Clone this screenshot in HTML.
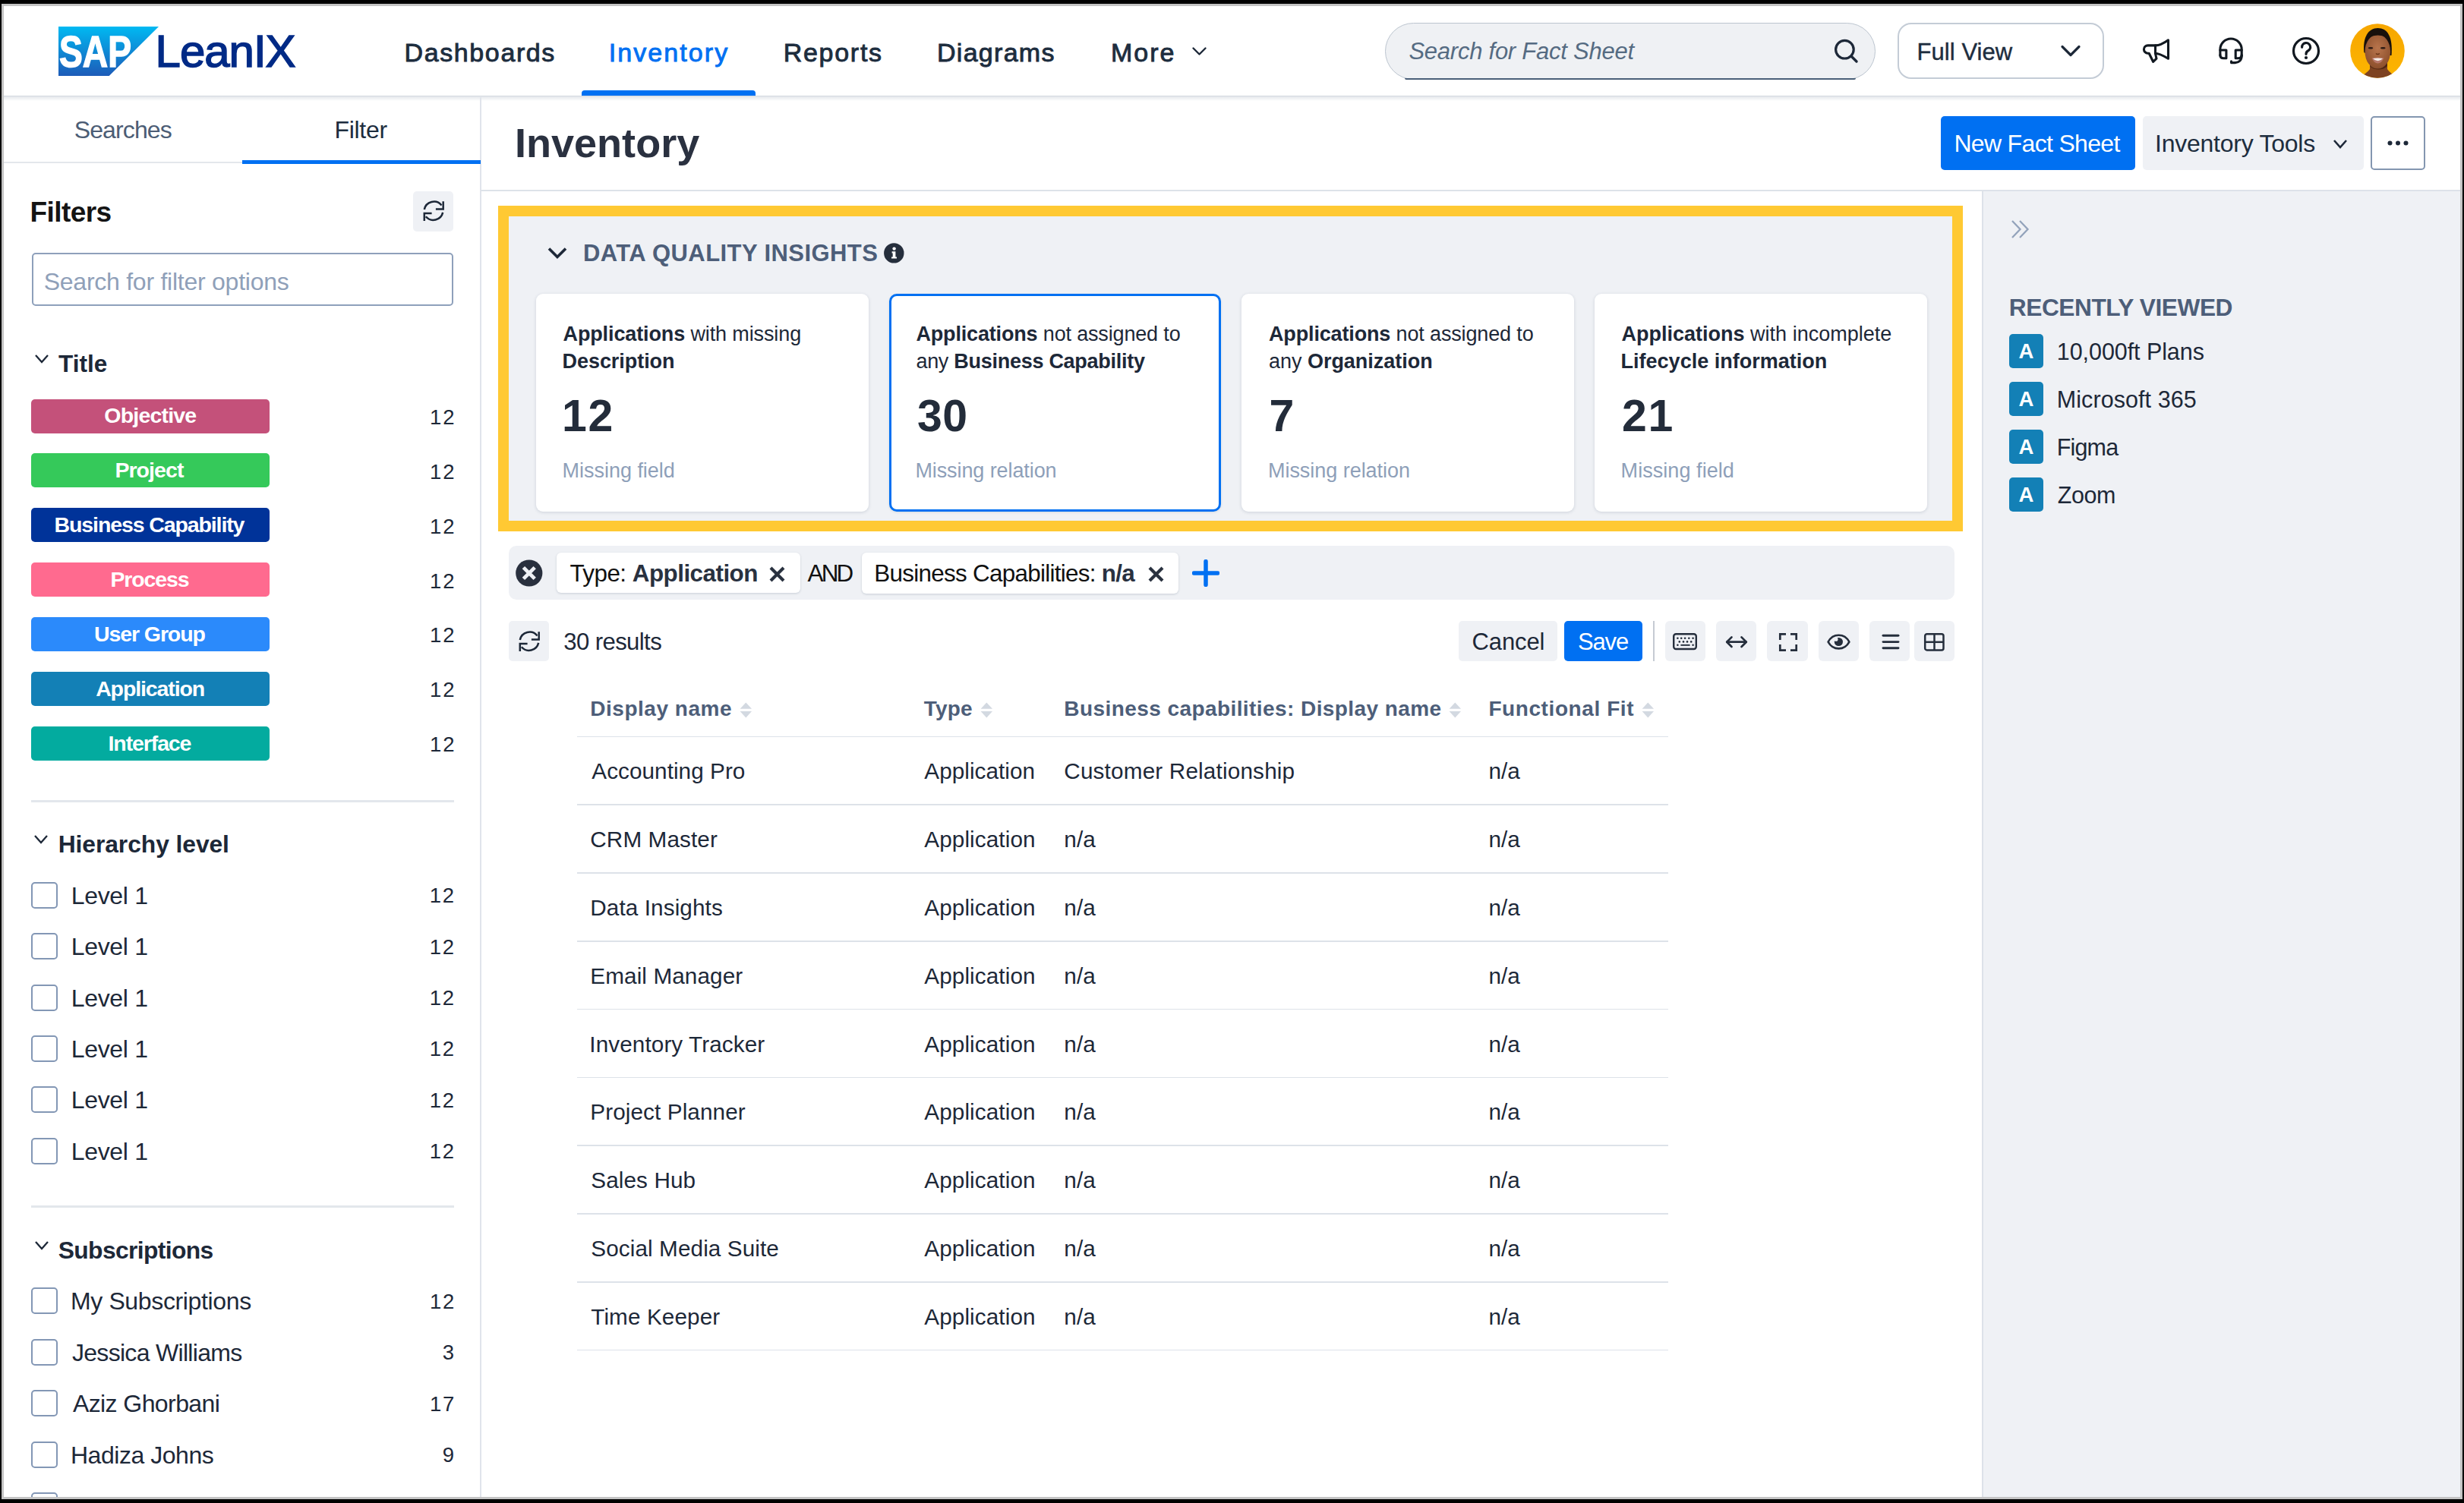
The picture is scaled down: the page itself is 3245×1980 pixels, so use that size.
<!DOCTYPE html>
<html><head><meta charset="utf-8"><title>SAP LeanIX Inventory</title>
<style>
html,body{margin:0;padding:0;width:3245px;height:1980px;overflow:hidden;background:#000;}
.a{position:absolute;display:block;}
.t{font-family:'Liberation Sans', sans-serif;line-height:1;white-space:nowrap;}
b{font-weight:700;}
</style></head><body>
<div class="a" style="left:2.00px;top:5.00px;width:3241.00px;height:1970.00px;background:#c3c3c3;"></div>
<div class="a" style="left:5.00px;top:8.00px;width:3235.00px;height:1964.00px;background:#ffffff;"></div>
<div class="a" style="left:0;top:0;width:3245px;height:1980px;clip-path:inset(8px 5px 8px 5px);">
<div class="a" style="left:5.00px;top:126.00px;width:3235.00px;height:7.00px;background:linear-gradient(#d3d8df 0px,#d3d8df 1px,rgba(210,215,222,0.55) 1.5px,rgba(230,233,238,0) 7px);"></div>
<div class="a" style="left:766.40px;top:119.00px;width:229.00px;height:7.00px;background:#0070f2;border-radius:4px 4px 0 0;"></div>
<svg class="a" style="left:77px;top:35px;" width="132" height="65" viewBox="0 0 132 65"><defs><linearGradient id="lg" x1="0" y1="0" x2="0" y2="1"><stop offset="0" stop-color="#00b9f2"/><stop offset="1" stop-color="#1d5bb8"/></linearGradient></defs><polygon points="0,0 132,0 66.7,65 0,65" fill="url(#lg)"/><text x="1" y="53" style="font-family:Liberation Sans;font-weight:700;font-size:58px" fill="#fff" stroke="#fff" stroke-width="1.5" textLength="95" lengthAdjust="spacingAndGlyphs">SAP</text></svg>
<div class="a" style="left:1824.30px;top:29.70px;width:646.00px;height:75.30px;background:#eff1f4;border:1.5px solid #bcc5cf;box-sizing:border-box;border-radius:38px;"></div>
<div class="a" style="left:1850.00px;top:102.60px;width:594.00px;height:2.40px;background:#4a5f78;border-radius:0 0 2px 2px;"></div>
<svg class="a" style="left:2410px;top:46px;" width="40" height="40" viewBox="0 0 40 40"><circle cx="19.4" cy="19.2" r="11.8" fill="none" stroke="#1d2838" stroke-width="3.2"/><line x1="28" y1="28" x2="35" y2="35" stroke="#1d2838" stroke-width="3.4" stroke-linecap="round"/></svg>
<div class="a" style="left:2498.50px;top:29.90px;width:272.50px;height:74.50px;background:#ffffff;border:2px solid #c4ccd6;box-sizing:border-box;border-radius:18px;"></div>
<svg class="a" style="left:2710px;top:55px;" width="34" height="25" viewBox="0 0 34 25"><polyline points="6,6.5 17,17.5 28,6.5" fill="none" stroke="#1d2838" stroke-width="3.2" stroke-linecap="round" stroke-linejoin="round"/></svg>
<svg class="a" style="left:1566px;top:58px;" width="28" height="20" viewBox="0 0 28 20"><polyline points="5.5,5.5 13.5,13.5 21.5,5.5" fill="none" stroke="#1d2838" stroke-width="2.4" stroke-linecap="round" stroke-linejoin="round"/></svg>
<svg class="a" style="left:2816px;top:46px;" width="48" height="44" viewBox="0 0 48 44"><g fill="none" stroke="#111820" stroke-width="3.1" stroke-linejoin="round" stroke-linecap="round"><path d="M22.5,13.9 C28,13.9 34,10.8 39.5,6.8 V31.3 C34,28 28,24.2 22.5,24.2"/><path d="M22.5,13.9 H12.6 A5.15,5.15 0 0 0 12.6,24.2 H14.2 L19.6,35.3 L24,31.2 L22.5,24.2 Z"/></g></svg>
<svg class="a" style="left:2917px;top:44px;" width="44" height="46" viewBox="0 0 44 46"><g fill="none" stroke="#111820" stroke-width="3.1" stroke-linejoin="round" stroke-linecap="round"><path d="M6.9,29 V21 A14.15,14 0 0 1 35.2,21 V29"/><path d="M6.9,22 H14.9 V32.8 H11.5 Q6.9,32.8 6.9,28.5"/><path d="M35.2,22 H27.2 V32.8 H30.6 Q35.2,32.8 35.2,28.5"/><path d="M35.2,29 C35.2,35.5 31.5,38.6 26.5,38.6 H21.5 V36.8"/></g></svg>
<svg class="a" style="left:3015px;top:45px;" width="44" height="44" viewBox="0 0 44 44"><circle cx="22" cy="22" r="16.5" fill="none" stroke="#111820" stroke-width="3.2"/><path d="M16.6,17.2 A5.5,5.5 0 1 1 24.5,22 C22.6,23 22,23.8 22,26.3" fill="none" stroke="#111820" stroke-width="3.2" stroke-linecap="round"/><circle cx="22" cy="31" r="2.1" fill="#111820"/></svg>
<svg class="a" style="left:3095px;top:31px;" width="72" height="72" viewBox="0 0 72 72"><defs><clipPath id="av"><circle cx="36" cy="36" r="35.8"/></clipPath><linearGradient id="ag" x1="0" y1="0" x2="0" y2="1"><stop offset="0" stop-color="#f6a600"/><stop offset="1" stop-color="#fdb500"/></linearGradient><radialGradient id="fg" cx="0.5" cy="0.4" r="0.6"><stop offset="0" stop-color="#b9754c"/><stop offset="1" stop-color="#8c4f2c"/></radialGradient></defs><g clip-path="url(#av)"><rect width="72" height="72" fill="url(#ag)"/><path d="M12,74 C16,67 23,65 26,60 L26,47 L49,47 L49,60 C52,65 58,67 62,74 Z" fill="#7e4322"/><path d="M26,50 C30,58 43,58 49,50 L49,56 C44,62 31,62 26,56 Z" fill="#4e2612"/><path d="M18.3,38 C16.5,18 24,6 36.5,6 C49,6 56.5,17 54.5,42 L50,42 L22,40 Z" fill="#17100c"/><ellipse cx="36.3" cy="37" rx="16.8" ry="22.6" fill="url(#fg)"/><path d="M19.6,27 C20.5,10 52,9 53.2,27 C50,18.5 43,15.6 36.5,15.6 C30,15.6 23,18.5 19.6,27 Z" fill="#17100c"/><ellipse cx="27" cy="32.3" rx="3.2" ry="1.3" fill="#2b1a14"/><ellipse cx="43.3" cy="32.3" rx="3.3" ry="1.3" fill="#2b1a14"/><path d="M28.5,45.5 Q36.5,43.8 44.5,45.5 Q41,52.5 36.5,52.5 Q32,52.5 28.5,45.5 Z" fill="#b8776a"/><path d="M30,46 Q36.5,45 43,46 Q40,49.3 36.5,49.3 Q33,49.3 30,46 Z" fill="#f3ece6"/><path d="M34,39.5 Q36.3,41.5 38.8,39.5" fill="none" stroke="#6a3518" stroke-width="1.4"/></g></svg>
<div class="a" style="left:632.00px;top:128.00px;width:2.00px;height:1844.00px;background:#e0e4eb;"></div>
<div class="a" style="left:5.00px;top:213.00px;width:314.00px;height:2.00px;background:#e3e7ec;"></div>
<div class="a" style="left:319.30px;top:211.00px;width:313.70px;height:4.70px;background:#0070f2;"></div>
<div class="a" style="left:544.00px;top:251.70px;width:53.40px;height:53.30px;background:#eff1f5;border-radius:5px;"></div>
<svg class="a" style="left:555.7px;top:263.4px;" width="30" height="30" viewBox="0 0 30 30"><g fill="none" stroke="#1d2838" stroke-width="2.5"><path d="M2.8,13.1 A12.9,12.9 0 0 1 25.5,7.5"/><path d="M27.7,2.3 V12.4 H17.9"/><path d="M27.2,16.9 A12.9,12.9 0 0 1 4.8,22.3"/><path d="M2.8,28.1 V17.9 H12.6"/></g></svg>
<div class="a" style="left:41.50px;top:333.00px;width:555.90px;height:70.00px;background:#ffffff;border:2px solid #8ea0bb;box-sizing:border-box;border-radius:5px;"></div>
<svg class="a" style="left:42.5px;top:463.5px;" width="24.0" height="17.0" viewBox="0 0 24.0 17.0"><polyline points="4,4 12.0,13.0 20.0,4" fill="none" stroke="#1d2838" stroke-width="2.3" stroke-linecap="butt" stroke-linejoin="miter"/></svg>
<svg class="a" style="left:42.3px;top:1096.5px;" width="24.0" height="17.0" viewBox="0 0 24.0 17.0"><polyline points="4,4 12.0,13.0 20.0,4" fill="none" stroke="#1d2838" stroke-width="2.3" stroke-linecap="butt" stroke-linejoin="miter"/></svg>
<svg class="a" style="left:42.5px;top:1631.5px;" width="24.0" height="17.0" viewBox="0 0 24.0 17.0"><polyline points="4,4 12.0,13.0 20.0,4" fill="none" stroke="#1d2838" stroke-width="2.3" stroke-linecap="butt" stroke-linejoin="miter"/></svg>
<div class="a" style="left:40.90px;top:525.50px;width:314.40px;height:45.00px;background:#c4517a;border-radius:5px;"></div>
<div class="a" style="left:40.90px;top:597.40px;width:314.40px;height:45.00px;background:#35c95a;border-radius:5px;"></div>
<div class="a" style="left:40.90px;top:669.30px;width:314.40px;height:45.00px;background:#003399;border-radius:5px;"></div>
<div class="a" style="left:40.90px;top:741.20px;width:314.40px;height:45.00px;background:#ff6a8f;border-radius:5px;"></div>
<div class="a" style="left:40.90px;top:813.10px;width:314.40px;height:45.00px;background:#2b8afb;border-radius:5px;"></div>
<div class="a" style="left:40.90px;top:885.00px;width:314.40px;height:45.00px;background:#1380b6;border-radius:5px;"></div>
<div class="a" style="left:40.90px;top:956.90px;width:314.40px;height:45.00px;background:#03ab9f;border-radius:5px;"></div>
<div class="a" style="left:41.00px;top:1054.00px;width:556.60px;height:2.50px;background:#e3e7ec;"></div>
<div class="a" style="left:41.00px;top:1588.00px;width:556.60px;height:2.50px;background:#e3e7ec;"></div>
<div class="a" style="left:41.20px;top:1161.60px;width:35.30px;height:35.00px;background:#fff;border:2px solid #8397b5;box-sizing:border-box;border-radius:5px;"></div>
<div class="a" style="left:41.20px;top:1229.05px;width:35.30px;height:35.00px;background:#fff;border:2px solid #8397b5;box-sizing:border-box;border-radius:5px;"></div>
<div class="a" style="left:41.20px;top:1296.50px;width:35.30px;height:35.00px;background:#fff;border:2px solid #8397b5;box-sizing:border-box;border-radius:5px;"></div>
<div class="a" style="left:41.20px;top:1363.95px;width:35.30px;height:35.00px;background:#fff;border:2px solid #8397b5;box-sizing:border-box;border-radius:5px;"></div>
<div class="a" style="left:41.20px;top:1431.40px;width:35.30px;height:35.00px;background:#fff;border:2px solid #8397b5;box-sizing:border-box;border-radius:5px;"></div>
<div class="a" style="left:41.20px;top:1498.85px;width:35.30px;height:35.00px;background:#fff;border:2px solid #8397b5;box-sizing:border-box;border-radius:5px;"></div>
<div class="a" style="left:41.20px;top:1696.00px;width:35.30px;height:35.00px;background:#fff;border:2px solid #8397b5;box-sizing:border-box;border-radius:5px;"></div>
<div class="a" style="left:41.20px;top:1763.60px;width:35.30px;height:35.00px;background:#fff;border:2px solid #8397b5;box-sizing:border-box;border-radius:5px;"></div>
<div class="a" style="left:41.20px;top:1831.20px;width:35.30px;height:35.00px;background:#fff;border:2px solid #8397b5;box-sizing:border-box;border-radius:5px;"></div>
<div class="a" style="left:41.20px;top:1898.80px;width:35.30px;height:35.00px;background:#fff;border:2px solid #8397b5;box-sizing:border-box;border-radius:5px;"></div>
<div class="a" style="left:41.20px;top:1966.40px;width:35.30px;height:35.00px;background:#fff;border:2px solid #8397b5;box-sizing:border-box;border-radius:5px;"></div>
<div class="a" style="left:633.00px;top:250.00px;width:2607.00px;height:1.50px;background:#dde2e9;"></div>
<div class="a" style="left:2556.30px;top:152.90px;width:255.60px;height:71.20px;background:#0070f2;border-radius:5px;"></div>
<div class="a" style="left:2821.70px;top:152.90px;width:291.50px;height:71.20px;background:#eff1f5;border-radius:5px;"></div>
<svg class="a" style="left:3070px;top:180.5px;" width="24" height="17.0" viewBox="0 0 24 17.0"><polyline points="4,4 12.0,13.0 20.0,4" fill="none" stroke="#1d2838" stroke-width="2.6" stroke-linecap="butt" stroke-linejoin="miter"/></svg>
<div class="a" style="left:3122.40px;top:153.20px;width:71.20px;height:70.80px;background:#fff;border:2px solid #8396b0;box-sizing:border-box;border-radius:5px;"></div>
<svg class="a" style="left:3140px;top:182px;" width="36" height="12" viewBox="0 0 36 12"><circle cx="7.5" cy="6.5" r="3" fill="#1d2838"/><circle cx="18" cy="6.5" r="3" fill="#1d2838"/><circle cx="28.5" cy="6.5" r="3" fill="#1d2838"/></svg>
<div class="a" style="left:2610.00px;top:251.50px;width:630.00px;height:1720.50px;background:#eff1f5;"></div>
<div class="a" style="left:2609.50px;top:251.50px;width:2.00px;height:1720.50px;background:#dde2e9;"></div>
<svg class="a" style="left:2645px;top:286px;" width="32" height="32" viewBox="0 0 32 32"><g fill="none" stroke="#93a3bb" stroke-width="2.3" stroke-linejoin="miter"><polyline points="5,5 15.5,16 5,27"/><polyline points="15,5 25.5,16 15,27"/></g></svg>
<div class="a" style="left:2646.00px;top:440.30px;width:45.00px;height:44.60px;background:#1380b6;border-radius:5px;"></div>
<div class="a" style="left:2646.00px;top:503.30px;width:45.00px;height:44.60px;background:#1380b6;border-radius:5px;"></div>
<div class="a" style="left:2646.00px;top:566.30px;width:45.00px;height:44.60px;background:#1380b6;border-radius:5px;"></div>
<div class="a" style="left:2646.00px;top:629.30px;width:45.00px;height:44.60px;background:#1380b6;border-radius:5px;"></div>
<div class="a" style="left:656.00px;top:271.00px;width:1929.00px;height:429.00px;background:#eff1f5;border:14px solid #ffc933;box-sizing:border-box;"></div>
<svg class="a" style="left:716px;top:320px;" width="36" height="26" viewBox="0 0 36 26"><polyline points="7,7.5 18,18.5 29,7.5" fill="none" stroke="#1d2838" stroke-width="3.6" stroke-linejoin="miter"/></svg>
<svg class="a" style="left:1162px;top:318px;" width="30" height="30" viewBox="0 0 30 30"><circle cx="15.3" cy="15.4" r="13.2" fill="#252e3c"/><circle cx="15.6" cy="9.6" r="2.2" fill="#fff"/><path d="M12.6,13.3 H17.4 V20.4 H19 V22.6 H12 V20.4 H13.7 V15.4 H12.6 Z" fill="#fff"/></svg>
<div class="a" style="left:706.00px;top:387.00px;width:438.00px;height:287.00px;background:#fff;border-radius:9px;box-shadow:0 1px 4px rgba(30,50,80,0.16);"></div>
<div class="a" style="left:1171.00px;top:387.00px;width:437.00px;height:287.00px;background:#fff;border:3.5px solid #0070f2;box-sizing:border-box;border-radius:10px;box-shadow:0 1px 3px rgba(30,50,80,0.12);"></div>
<div class="a" style="left:1635.00px;top:387.00px;width:438.00px;height:287.00px;background:#fff;border-radius:9px;box-shadow:0 1px 4px rgba(30,50,80,0.16);"></div>
<div class="a" style="left:2100.00px;top:387.00px;width:438.00px;height:287.00px;background:#fff;border-radius:9px;box-shadow:0 1px 4px rgba(30,50,80,0.16);"></div>
<div class="a" style="left:669.90px;top:718.90px;width:1904.10px;height:71.50px;background:#eff1f5;border-radius:10px;"></div>
<svg class="a" style="left:677px;top:734.5px;" width="40" height="40" viewBox="0 0 40 40"><circle cx="19.8" cy="20" r="17.6" fill="#29303e"/><path d="M12.4,12.6 L27.2,27.4 M27.2,12.6 L12.4,27.4" stroke="#eff1f5" stroke-width="4.8" stroke-linecap="butt"/></svg>
<div class="a" style="left:732.90px;top:727.90px;width:320.90px;height:53.50px;background:#fff;border-radius:6px;box-shadow:0 1px 3px rgba(30,50,80,0.18);"></div>
<div class="a" style="left:1134.70px;top:727.80px;width:417.30px;height:54.00px;background:#fff;border-radius:6px;box-shadow:0 1px 3px rgba(30,50,80,0.18);"></div>
<svg class="a" style="left:1012px;top:745px;" width="23" height="23" viewBox="0 0 23 23"><path d="M3,3 L20.0,20.0 M20.0,3 L3,20.0" stroke="#29313f" stroke-width="4.2"/></svg>
<svg class="a" style="left:1510.5px;top:745px;" width="23.0" height="23" viewBox="0 0 23.0 23"><path d="M3,3 L20.0,20.0 M20.0,3 L3,20.0" stroke="#29313f" stroke-width="4.2"/></svg>
<svg class="a" style="left:1570px;top:737px;" width="36" height="36" viewBox="0 0 36 36"><path d="M18,2.5 V33.5 M2.5,18 H33.5" stroke="#0070f2" stroke-width="5.5" stroke-linecap="round"/></svg>
<div class="a" style="left:670.20px;top:817.70px;width:53.10px;height:53.00px;background:#eff1f5;border-radius:5px;"></div>
<svg class="a" style="left:681.5px;top:830.4px;" width="30" height="30" viewBox="0 0 30 30"><g fill="none" stroke="#1d2838" stroke-width="2.5"><path d="M2.8,13.1 A12.9,12.9 0 0 1 25.5,7.5"/><path d="M27.7,2.3 V12.4 H17.9"/><path d="M27.2,16.9 A12.9,12.9 0 0 1 4.8,22.3"/><path d="M2.8,28.1 V17.9 H12.6"/></g></svg>
<div class="a" style="left:1921.00px;top:817.60px;width:129.70px;height:53.10px;background:#eff1f5;border-radius:5px;"></div>
<div class="a" style="left:2060.00px;top:817.60px;width:103.00px;height:53.40px;background:#0070f2;border-radius:5px;"></div>
<div class="a" style="left:2177.00px;top:818.00px;width:1.60px;height:52.70px;background:#c5cbd3;"></div>
<div class="a" style="left:2192.80px;top:817.80px;width:53.20px;height:53.10px;background:#eff1f5;border-radius:6px;"></div>
<div class="a" style="left:2260.00px;top:817.80px;width:53.20px;height:53.10px;background:#eff1f5;border-radius:6px;"></div>
<div class="a" style="left:2327.40px;top:817.80px;width:53.20px;height:53.10px;background:#eff1f5;border-radius:6px;"></div>
<div class="a" style="left:2394.70px;top:817.80px;width:53.20px;height:53.10px;background:#eff1f5;border-radius:6px;"></div>
<div class="a" style="left:2462.00px;top:817.80px;width:53.20px;height:53.10px;background:#eff1f5;border-radius:6px;"></div>
<div class="a" style="left:2520.50px;top:817.80px;width:53.20px;height:53.10px;background:#eff1f5;border-radius:6px;"></div>
<svg class="a" style="left:2202px;top:833px;" width="34" height="24" viewBox="0 0 34 24"><rect x="2.2" y="2.2" width="29.6" height="19.8" rx="3" fill="none" stroke="#252e3c" stroke-width="2.4"/><circle cx="7.4" cy="7.8" r="1.3" fill="#252e3c"/><circle cx="12.2" cy="7.8" r="1.3" fill="#252e3c"/><circle cx="17.1" cy="7.8" r="1.3" fill="#252e3c"/><circle cx="22.3" cy="7.8" r="1.3" fill="#252e3c"/><circle cx="27.6" cy="7.8" r="1.3" fill="#252e3c"/><circle cx="9.8" cy="12.4" r="1.3" fill="#252e3c"/><circle cx="15" cy="12.4" r="1.3" fill="#252e3c"/><circle cx="20" cy="12.4" r="1.3" fill="#252e3c"/><circle cx="25.2" cy="12.4" r="1.3" fill="#252e3c"/><circle cx="7.4" cy="16.8" r="1.3" fill="#252e3c"/><circle cx="27.6" cy="16.8" r="1.3" fill="#252e3c"/><rect x="11.4" y="15.9" width="12.2" height="1.9" fill="#252e3c"/></svg>
<svg class="a" style="left:2271px;top:836px;" width="32" height="20" viewBox="0 0 32 20"><g fill="none" stroke="#252e3c" stroke-width="2.7" stroke-linecap="round" stroke-linejoin="round"><path d="M3.5,9.7 H28.5"/><polyline points="9.5,3.4 3.2,9.7 9.5,16"/><polyline points="22.5,3.4 28.8,9.7 22.5,16"/></g></svg>
<svg class="a" style="left:2341px;top:832px;" width="28" height="28" viewBox="0 0 28 28"><g fill="none" stroke="#252e3c" stroke-width="2.7"><polyline points="11,3.3 3.3,3.3 3.3,11"/><polyline points="17,3.3 24.7,3.3 24.7,11"/><polyline points="3.3,17 3.3,24.7 11,24.7"/><polyline points="24.7,17 24.7,24.7 17,24.7"/></g></svg>
<svg class="a" style="left:2404px;top:833px;" width="35" height="26" viewBox="0 0 35 26"><path d="M3.6,12.6 C7,6.3 12,3.8 17.5,3.8 C23,3.8 28,6.3 31.4,12.6 C28,18.9 23,21.4 17.5,21.4 C12,21.4 7,18.9 3.6,12.6 Z" fill="none" stroke="#252e3c" stroke-width="2.6" stroke-linejoin="round"/><circle cx="17.4" cy="12.5" r="5.6" fill="#252e3c"/><circle cx="13.9" cy="9.2" r="2.6" fill="#eff1f5"/></svg>
<svg class="a" style="left:2476px;top:834px;" width="28" height="24" viewBox="0 0 28 24"><g stroke="#252e3c" stroke-width="2.9" stroke-linecap="round"><line x1="4" y1="3.3" x2="24" y2="3.3"/><line x1="4" y1="11.6" x2="24" y2="11.6"/><line x1="4" y1="19.8" x2="24" y2="19.8"/></g></svg>
<svg class="a" style="left:2532px;top:832px;" width="31" height="28" viewBox="0 0 31 28"><g fill="none" stroke="#252e3c" stroke-width="2.5"><rect x="3.2" y="3.2" width="24.3" height="21.2" rx="2.5"/><line x1="15.5" y1="3.3" x2="15.5" y2="24.3"/><line x1="3.3" y1="13.8" x2="27.7" y2="13.8"/></g></svg>
<div class="a" style="left:759.50px;top:969.50px;width:1437.50px;height:1.80px;background:#dde2e9;"></div>
<div class="a" style="left:759.50px;top:1059.30px;width:1437.50px;height:1.80px;background:#dde2e9;"></div>
<div class="a" style="left:759.50px;top:1149.10px;width:1437.50px;height:1.80px;background:#dde2e9;"></div>
<div class="a" style="left:759.50px;top:1238.90px;width:1437.50px;height:1.80px;background:#dde2e9;"></div>
<div class="a" style="left:759.50px;top:1328.70px;width:1437.50px;height:1.80px;background:#dde2e9;"></div>
<div class="a" style="left:759.50px;top:1418.50px;width:1437.50px;height:1.80px;background:#dde2e9;"></div>
<div class="a" style="left:759.50px;top:1508.30px;width:1437.50px;height:1.80px;background:#dde2e9;"></div>
<div class="a" style="left:759.50px;top:1598.10px;width:1437.50px;height:1.80px;background:#dde2e9;"></div>
<div class="a" style="left:759.50px;top:1687.90px;width:1437.50px;height:1.80px;background:#dde2e9;"></div>
<div class="a" style="left:759.50px;top:1777.70px;width:1437.50px;height:1.80px;background:#dde2e9;"></div>
<svg class="a" style="left:974px;top:924px;" width="17" height="23" viewBox="0 0 17 23"><polygon points="8.3,1.5 16,9.8 0.6,9.8" fill="#d3d9e1"/><polygon points="0.6,13 16,13 8.3,21.5" fill="#d3d9e1"/></svg>
<svg class="a" style="left:1290.7px;top:924px;" width="17" height="23" viewBox="0 0 17 23"><polygon points="8.3,1.5 16,9.8 0.6,9.8" fill="#d3d9e1"/><polygon points="0.6,13 16,13 8.3,21.5" fill="#d3d9e1"/></svg>
<svg class="a" style="left:1908px;top:924px;" width="17" height="23" viewBox="0 0 17 23"><polygon points="8.3,1.5 16,9.8 0.6,9.8" fill="#d3d9e1"/><polygon points="0.6,13 16,13 8.3,21.5" fill="#d3d9e1"/></svg>
<svg class="a" style="left:2162px;top:924px;" width="17" height="23" viewBox="0 0 17 23"><polygon points="8.3,1.5 16,9.8 0.6,9.8" fill="#d3d9e1"/><polygon points="0.6,13 16,13 8.3,21.5" fill="#d3d9e1"/></svg>
<span class="a t" style="left:204.60px;top:37.70px;font-size:60px;color:#002a86;letter-spacing:-1.040px;-webkit-text-stroke:1.5px #002a86;">LeanIX</span>
<span class="a t" style="left:532.60px;top:52.30px;font-size:34px;color:#1d2d3e;letter-spacing:1.600px;-webkit-text-stroke:0.9px #1d2d3e;">Dashboards</span>
<span class="a t" style="left:801.80px;top:52.30px;font-size:34px;color:#0070f2;letter-spacing:2.062px;-webkit-text-stroke:0.9px #0070f2;">Inventory</span>
<span class="a t" style="left:1031.70px;top:52.30px;font-size:34px;color:#1d2d3e;letter-spacing:1.717px;-webkit-text-stroke:0.9px #1d2d3e;">Reports</span>
<span class="a t" style="left:1234.00px;top:52.30px;font-size:34px;color:#1d2d3e;letter-spacing:1.286px;-webkit-text-stroke:0.9px #1d2d3e;">Diagrams</span>
<span class="a t" style="left:1463.00px;top:52.30px;font-size:34px;color:#1d2d3e;letter-spacing:2.000px;-webkit-text-stroke:0.9px #1d2d3e;">More</span>
<span class="a t" style="left:1855.40px;top:52.40px;font-size:31px;color:#556b82;letter-spacing:-0.245px;font-style:italic;">Search for Fact Sheet</span>
<span class="a t" style="left:2524.60px;top:52.80px;font-size:31px;color:#1d2d3e;letter-spacing:0.050px;-webkit-text-stroke:0.4px #1d2d3e;">Full View</span>
<span class="a t" style="left:97.70px;top:155.00px;font-size:32px;color:#4c5d75;letter-spacing:-0.871px;">Searches</span>
<span class="a t" style="left:440.50px;top:155.00px;font-size:32px;color:#1d2d3e;letter-spacing:-0.300px;">Filter</span>
<span class="a t" style="left:677.90px;top:160.60px;font-size:54px;color:#2a3140;font-weight:700;letter-spacing:0.038px;">Inventory</span>
<span class="a t" style="left:2573.40px;top:173.40px;font-size:32px;color:#ffffff;letter-spacing:-0.669px;">New Fact Sheet</span>
<span class="a t" style="left:2838.00px;top:173.40px;font-size:32px;color:#1d2d3e;letter-spacing:-0.250px;">Inventory Tools</span>
<span class="a t" style="left:39.50px;top:261.00px;font-size:37px;color:#141414;font-weight:700;letter-spacing:-0.583px;">Filters</span>
<span class="a t" style="left:57.70px;top:355.00px;font-size:32px;color:#8fa0b9;letter-spacing:-0.250px;">Search for filter options</span>
<span class="a t" style="left:77.00px;top:463.60px;font-size:31.5px;color:#1d2838;font-weight:700;">Title</span>
<span class="a t" style="left:137.30px;top:533.20px;font-size:28.5px;color:#ffffff;font-weight:700;letter-spacing:-0.800px;">Objective</span>
<span class="a t" style="left:566.00px;top:535.80px;font-size:27.5px;color:#1d2838;letter-spacing:2.000px;">12</span>
<span class="a t" style="left:151.40px;top:605.10px;font-size:28.5px;color:#ffffff;font-weight:700;letter-spacing:-0.933px;">Project</span>
<span class="a t" style="left:566.00px;top:607.70px;font-size:27.5px;color:#1d2838;letter-spacing:2.000px;">12</span>
<span class="a t" style="left:71.55px;top:677.00px;font-size:28.5px;color:#ffffff;font-weight:700;letter-spacing:-1.106px;">Business Capability</span>
<span class="a t" style="left:566.00px;top:679.60px;font-size:27.5px;color:#1d2838;letter-spacing:2.000px;">12</span>
<span class="a t" style="left:145.42px;top:748.90px;font-size:28.5px;color:#ffffff;font-weight:700;letter-spacing:-1.106px;">Process</span>
<span class="a t" style="left:566.00px;top:751.50px;font-size:27.5px;color:#1d2838;letter-spacing:2.000px;">12</span>
<span class="a t" style="left:124.07px;top:820.80px;font-size:28.5px;color:#ffffff;font-weight:700;letter-spacing:-1.106px;">User Group</span>
<span class="a t" style="left:566.00px;top:823.40px;font-size:27.5px;color:#1d2838;letter-spacing:2.000px;">12</span>
<span class="a t" style="left:126.13px;top:892.70px;font-size:28.5px;color:#ffffff;font-weight:700;letter-spacing:-1.106px;">Application</span>
<span class="a t" style="left:566.00px;top:895.30px;font-size:27.5px;color:#1d2838;letter-spacing:2.000px;">12</span>
<span class="a t" style="left:142.52px;top:964.60px;font-size:28.5px;color:#ffffff;font-weight:700;letter-spacing:-1.106px;">Interface</span>
<span class="a t" style="left:566.00px;top:967.20px;font-size:27.5px;color:#1d2838;letter-spacing:2.000px;">12</span>
<span class="a t" style="left:76.70px;top:1097.20px;font-size:31.8px;color:#1d2838;font-weight:700;letter-spacing:-0.071px;">Hierarchy level</span>
<span class="a t" style="left:93.70px;top:1163.60px;font-size:32px;color:#1d2838;letter-spacing:-0.317px;">Level 1</span>
<span class="a t" style="left:565.70px;top:1166.10px;font-size:27.5px;color:#1d2838;letter-spacing:1.800px;">12</span>
<span class="a t" style="left:93.70px;top:1231.05px;font-size:32px;color:#1d2838;letter-spacing:-0.317px;">Level 1</span>
<span class="a t" style="left:565.70px;top:1233.55px;font-size:27.5px;color:#1d2838;letter-spacing:1.800px;">12</span>
<span class="a t" style="left:93.70px;top:1298.50px;font-size:32px;color:#1d2838;letter-spacing:-0.317px;">Level 1</span>
<span class="a t" style="left:565.70px;top:1301.00px;font-size:27.5px;color:#1d2838;letter-spacing:1.800px;">12</span>
<span class="a t" style="left:93.70px;top:1365.95px;font-size:32px;color:#1d2838;letter-spacing:-0.317px;">Level 1</span>
<span class="a t" style="left:565.70px;top:1368.45px;font-size:27.5px;color:#1d2838;letter-spacing:1.800px;">12</span>
<span class="a t" style="left:93.70px;top:1433.40px;font-size:32px;color:#1d2838;letter-spacing:-0.317px;">Level 1</span>
<span class="a t" style="left:565.70px;top:1435.90px;font-size:27.5px;color:#1d2838;letter-spacing:1.800px;">12</span>
<span class="a t" style="left:93.70px;top:1500.85px;font-size:32px;color:#1d2838;letter-spacing:-0.317px;">Level 1</span>
<span class="a t" style="left:565.70px;top:1503.35px;font-size:27.5px;color:#1d2838;letter-spacing:1.800px;">12</span>
<span class="a t" style="left:76.70px;top:1631.80px;font-size:31.8px;color:#1d2838;font-weight:700;letter-spacing:-0.617px;">Subscriptions</span>
<span class="a t" style="left:92.90px;top:1698.00px;font-size:32px;color:#1d2838;letter-spacing:-0.353px;">My Subscriptions</span>
<span class="a t" style="left:565.90px;top:1700.50px;font-size:27.5px;color:#1d2838;letter-spacing:1.800px;">12</span>
<span class="a t" style="left:94.90px;top:1765.60px;font-size:32px;color:#1d2838;letter-spacing:-0.687px;">Jessica Williams</span>
<span class="a t" style="left:582.70px;top:1768.10px;font-size:27.5px;color:#1d2838;letter-spacing:1.800px;">3</span>
<span class="a t" style="left:95.90px;top:1833.20px;font-size:32px;color:#1d2838;letter-spacing:-0.583px;">Aziz Ghorbani</span>
<span class="a t" style="left:565.90px;top:1835.70px;font-size:27.5px;color:#1d2838;letter-spacing:1.800px;">17</span>
<span class="a t" style="left:92.90px;top:1900.80px;font-size:32px;color:#1d2838;letter-spacing:-0.455px;">Hadiza Johns</span>
<span class="a t" style="left:582.70px;top:1903.30px;font-size:27.5px;color:#1d2838;letter-spacing:1.800px;">9</span>
<span class="a t" style="left:92.90px;top:1968.40px;font-size:32px;color:#1d2838;letter-spacing:-0.455px;">Kelly Brooks</span>
<span class="a t" style="left:582.70px;top:1970.90px;font-size:27.5px;color:#1d2838;letter-spacing:1.800px;">5</span>
<span class="a t" style="left:767.90px;top:317.60px;font-size:31px;color:#4d5e79;font-weight:700;letter-spacing:0.425px;">DATA QUALITY INSIGHTS</span>
<span class="a t" style="left:741.50px;top:427.30px;font-size:27px;color:#1d2838;letter-spacing:-0.121px;"><b>Applications</b> with missing</span>
<span class="a t" style="left:740.50px;top:463.10px;font-size:27px;color:#1d2838;letter-spacing:-0.050px;"><b>Description</b></span>
<span class="a t" style="left:740.00px;top:518.80px;font-size:59px;color:#232c3a;font-weight:700;letter-spacing:1.600px;">12</span>
<span class="a t" style="left:740.50px;top:606.70px;font-size:27px;color:#8e9fb9;letter-spacing:-0.017px;">Missing field</span>
<span class="a t" style="left:1206.40px;top:427.30px;font-size:27px;color:#1d2838;letter-spacing:-0.163px;"><b>Applications</b> not assigned to</span>
<span class="a t" style="left:1206.40px;top:463.10px;font-size:27px;color:#1d2838;letter-spacing:-0.277px;">any <b>Business Capability</b></span>
<span class="a t" style="left:1207.90px;top:518.80px;font-size:59px;color:#232c3a;font-weight:700;letter-spacing:0.500px;">30</span>
<span class="a t" style="left:1205.40px;top:606.70px;font-size:27px;color:#8e9fb9;letter-spacing:-0.093px;">Missing relation</span>
<span class="a t" style="left:1671.00px;top:427.30px;font-size:27px;color:#1d2838;letter-spacing:-0.148px;"><b>Applications</b> not assigned to</span>
<span class="a t" style="left:1671.00px;top:463.10px;font-size:27px;color:#1d2838;letter-spacing:-0.027px;">any <b>Organization</b></span>
<span class="a t" style="left:1671.50px;top:518.80px;font-size:59px;color:#232c3a;font-weight:700;letter-spacing:0.500px;">7</span>
<span class="a t" style="left:1670.00px;top:606.70px;font-size:27px;color:#8e9fb9;letter-spacing:-0.040px;">Missing relation</span>
<span class="a t" style="left:2135.60px;top:427.30px;font-size:27px;color:#1d2838;"><b>Applications</b> with incomplete</span>
<span class="a t" style="left:2134.60px;top:463.10px;font-size:27px;color:#1d2838;"><b>Lifecycle information</b></span>
<span class="a t" style="left:2136.10px;top:518.80px;font-size:59px;color:#232c3a;font-weight:700;letter-spacing:1.700px;">21</span>
<span class="a t" style="left:2134.60px;top:606.70px;font-size:27px;color:#8e9fb9;letter-spacing:0.058px;">Missing field</span>
<span class="a t" style="left:750.40px;top:740.00px;font-size:31.4px;color:#111111;letter-spacing:-0.525px;">Type: <b style="color:#29313f">Application</b></span>
<span class="a t" style="left:1063.40px;top:740.00px;font-size:31.4px;color:#111111;letter-spacing:-2.700px;">AND</span>
<span class="a t" style="left:1151.20px;top:740.00px;font-size:31.4px;color:#111111;letter-spacing:-0.704px;">Business Capabilities: <b style="color:#29313f">n/a</b></span>
<span class="a t" style="left:742.30px;top:829.60px;font-size:31.1px;color:#1d2838;letter-spacing:-0.600px;">30 results</span>
<span class="a t" style="left:1938.60px;top:829.50px;font-size:31px;color:#1d2838;letter-spacing:-0.120px;">Cancel</span>
<span class="a t" style="left:2078.00px;top:830.00px;font-size:31px;color:#ffffff;letter-spacing:-1.167px;">Save</span>
<span class="a t" style="left:777.30px;top:920.20px;font-size:28px;color:#4d5e79;font-weight:700;letter-spacing:0.518px;">Display name</span>
<span class="a t" style="left:1216.80px;top:920.20px;font-size:28px;color:#4d5e79;font-weight:700;letter-spacing:0.167px;">Type</span>
<span class="a t" style="left:1401.30px;top:920.20px;font-size:28px;color:#4d5e79;font-weight:700;letter-spacing:0.426px;">Business capabilities: Display name</span>
<span class="a t" style="left:1960.40px;top:920.20px;font-size:28px;color:#4d5e79;font-weight:700;letter-spacing:0.585px;">Functional Fit</span>
<span class="a t" style="left:779.30px;top:1001.30px;font-size:29.7px;color:#1d2838;letter-spacing:0.054px;">Accounting Pro</span>
<span class="a t" style="left:1217.30px;top:1001.30px;font-size:29.7px;color:#1d2838;letter-spacing:0.054px;">Application</span>
<span class="a t" style="left:1401.30px;top:1001.30px;font-size:29.7px;color:#1d2838;letter-spacing:0.175px;">Customer Relationship</span>
<span class="a t" style="left:1960.40px;top:1001.30px;font-size:29.7px;color:#1d2838;letter-spacing:0.100px;">n/a</span>
<span class="a t" style="left:777.30px;top:1091.10px;font-size:29.7px;color:#1d2838;letter-spacing:0.100px;">CRM Master</span>
<span class="a t" style="left:1217.30px;top:1091.10px;font-size:29.7px;color:#1d2838;letter-spacing:0.100px;">Application</span>
<span class="a t" style="left:1401.30px;top:1091.10px;font-size:29.7px;color:#1d2838;letter-spacing:0.100px;">n/a</span>
<span class="a t" style="left:1960.40px;top:1091.10px;font-size:29.7px;color:#1d2838;letter-spacing:0.100px;">n/a</span>
<span class="a t" style="left:777.30px;top:1180.90px;font-size:29.7px;color:#1d2838;letter-spacing:0.100px;">Data Insights</span>
<span class="a t" style="left:1217.30px;top:1180.90px;font-size:29.7px;color:#1d2838;letter-spacing:0.100px;">Application</span>
<span class="a t" style="left:1401.30px;top:1180.90px;font-size:29.7px;color:#1d2838;letter-spacing:0.100px;">n/a</span>
<span class="a t" style="left:1960.40px;top:1180.90px;font-size:29.7px;color:#1d2838;letter-spacing:0.100px;">n/a</span>
<span class="a t" style="left:777.30px;top:1270.70px;font-size:29.7px;color:#1d2838;letter-spacing:0.100px;">Email Manager</span>
<span class="a t" style="left:1217.30px;top:1270.70px;font-size:29.7px;color:#1d2838;letter-spacing:0.100px;">Application</span>
<span class="a t" style="left:1401.30px;top:1270.70px;font-size:29.7px;color:#1d2838;letter-spacing:0.100px;">n/a</span>
<span class="a t" style="left:1960.40px;top:1270.70px;font-size:29.7px;color:#1d2838;letter-spacing:0.100px;">n/a</span>
<span class="a t" style="left:776.30px;top:1360.50px;font-size:29.7px;color:#1d2838;letter-spacing:0.100px;">Inventory Tracker</span>
<span class="a t" style="left:1217.30px;top:1360.50px;font-size:29.7px;color:#1d2838;letter-spacing:0.100px;">Application</span>
<span class="a t" style="left:1401.30px;top:1360.50px;font-size:29.7px;color:#1d2838;letter-spacing:0.100px;">n/a</span>
<span class="a t" style="left:1960.40px;top:1360.50px;font-size:29.7px;color:#1d2838;letter-spacing:0.100px;">n/a</span>
<span class="a t" style="left:777.30px;top:1450.30px;font-size:29.7px;color:#1d2838;letter-spacing:0.100px;">Project Planner</span>
<span class="a t" style="left:1217.30px;top:1450.30px;font-size:29.7px;color:#1d2838;letter-spacing:0.100px;">Application</span>
<span class="a t" style="left:1401.30px;top:1450.30px;font-size:29.7px;color:#1d2838;letter-spacing:0.100px;">n/a</span>
<span class="a t" style="left:1960.40px;top:1450.30px;font-size:29.7px;color:#1d2838;letter-spacing:0.100px;">n/a</span>
<span class="a t" style="left:778.30px;top:1540.10px;font-size:29.7px;color:#1d2838;letter-spacing:0.100px;">Sales Hub</span>
<span class="a t" style="left:1217.30px;top:1540.10px;font-size:29.7px;color:#1d2838;letter-spacing:0.100px;">Application</span>
<span class="a t" style="left:1401.30px;top:1540.10px;font-size:29.7px;color:#1d2838;letter-spacing:0.100px;">n/a</span>
<span class="a t" style="left:1960.40px;top:1540.10px;font-size:29.7px;color:#1d2838;letter-spacing:0.100px;">n/a</span>
<span class="a t" style="left:778.30px;top:1629.90px;font-size:29.7px;color:#1d2838;letter-spacing:0.100px;">Social Media Suite</span>
<span class="a t" style="left:1217.30px;top:1629.90px;font-size:29.7px;color:#1d2838;letter-spacing:0.100px;">Application</span>
<span class="a t" style="left:1401.30px;top:1629.90px;font-size:29.7px;color:#1d2838;letter-spacing:0.100px;">n/a</span>
<span class="a t" style="left:1960.40px;top:1629.90px;font-size:29.7px;color:#1d2838;letter-spacing:0.100px;">n/a</span>
<span class="a t" style="left:778.30px;top:1719.70px;font-size:29.7px;color:#1d2838;letter-spacing:0.100px;">Time Keeper</span>
<span class="a t" style="left:1217.30px;top:1719.70px;font-size:29.7px;color:#1d2838;letter-spacing:0.100px;">Application</span>
<span class="a t" style="left:1401.30px;top:1719.70px;font-size:29.7px;color:#1d2838;letter-spacing:0.100px;">n/a</span>
<span class="a t" style="left:1960.40px;top:1719.70px;font-size:29.7px;color:#1d2838;letter-spacing:0.100px;">n/a</span>
<span class="a t" style="left:2645.80px;top:389.90px;font-size:31.7px;color:#4d5e79;font-weight:700;letter-spacing:-0.457px;">RECENTLY VIEWED</span>
<span class="a t" style="left:2658.50px;top:449.10px;font-size:27.5px;color:#ffffff;font-weight:700;">A</span>
<span class="a t" style="left:2708.80px;top:447.70px;font-size:30.5px;color:#1d2838;letter-spacing:-0.069px;">10,000ft Plans</span>
<span class="a t" style="left:2658.50px;top:512.10px;font-size:27.5px;color:#ffffff;font-weight:700;">A</span>
<span class="a t" style="left:2708.80px;top:510.70px;font-size:30.5px;color:#1d2838;letter-spacing:0.067px;">Microsoft 365</span>
<span class="a t" style="left:2658.50px;top:575.10px;font-size:27.5px;color:#ffffff;font-weight:700;">A</span>
<span class="a t" style="left:2708.80px;top:573.70px;font-size:30.5px;color:#1d2838;letter-spacing:-0.850px;">Figma</span>
<span class="a t" style="left:2658.50px;top:638.10px;font-size:27.5px;color:#ffffff;font-weight:700;">A</span>
<span class="a t" style="left:2709.80px;top:636.70px;font-size:30.5px;color:#1d2838;letter-spacing:-0.467px;">Zoom</span>
</div>
</body></html>
